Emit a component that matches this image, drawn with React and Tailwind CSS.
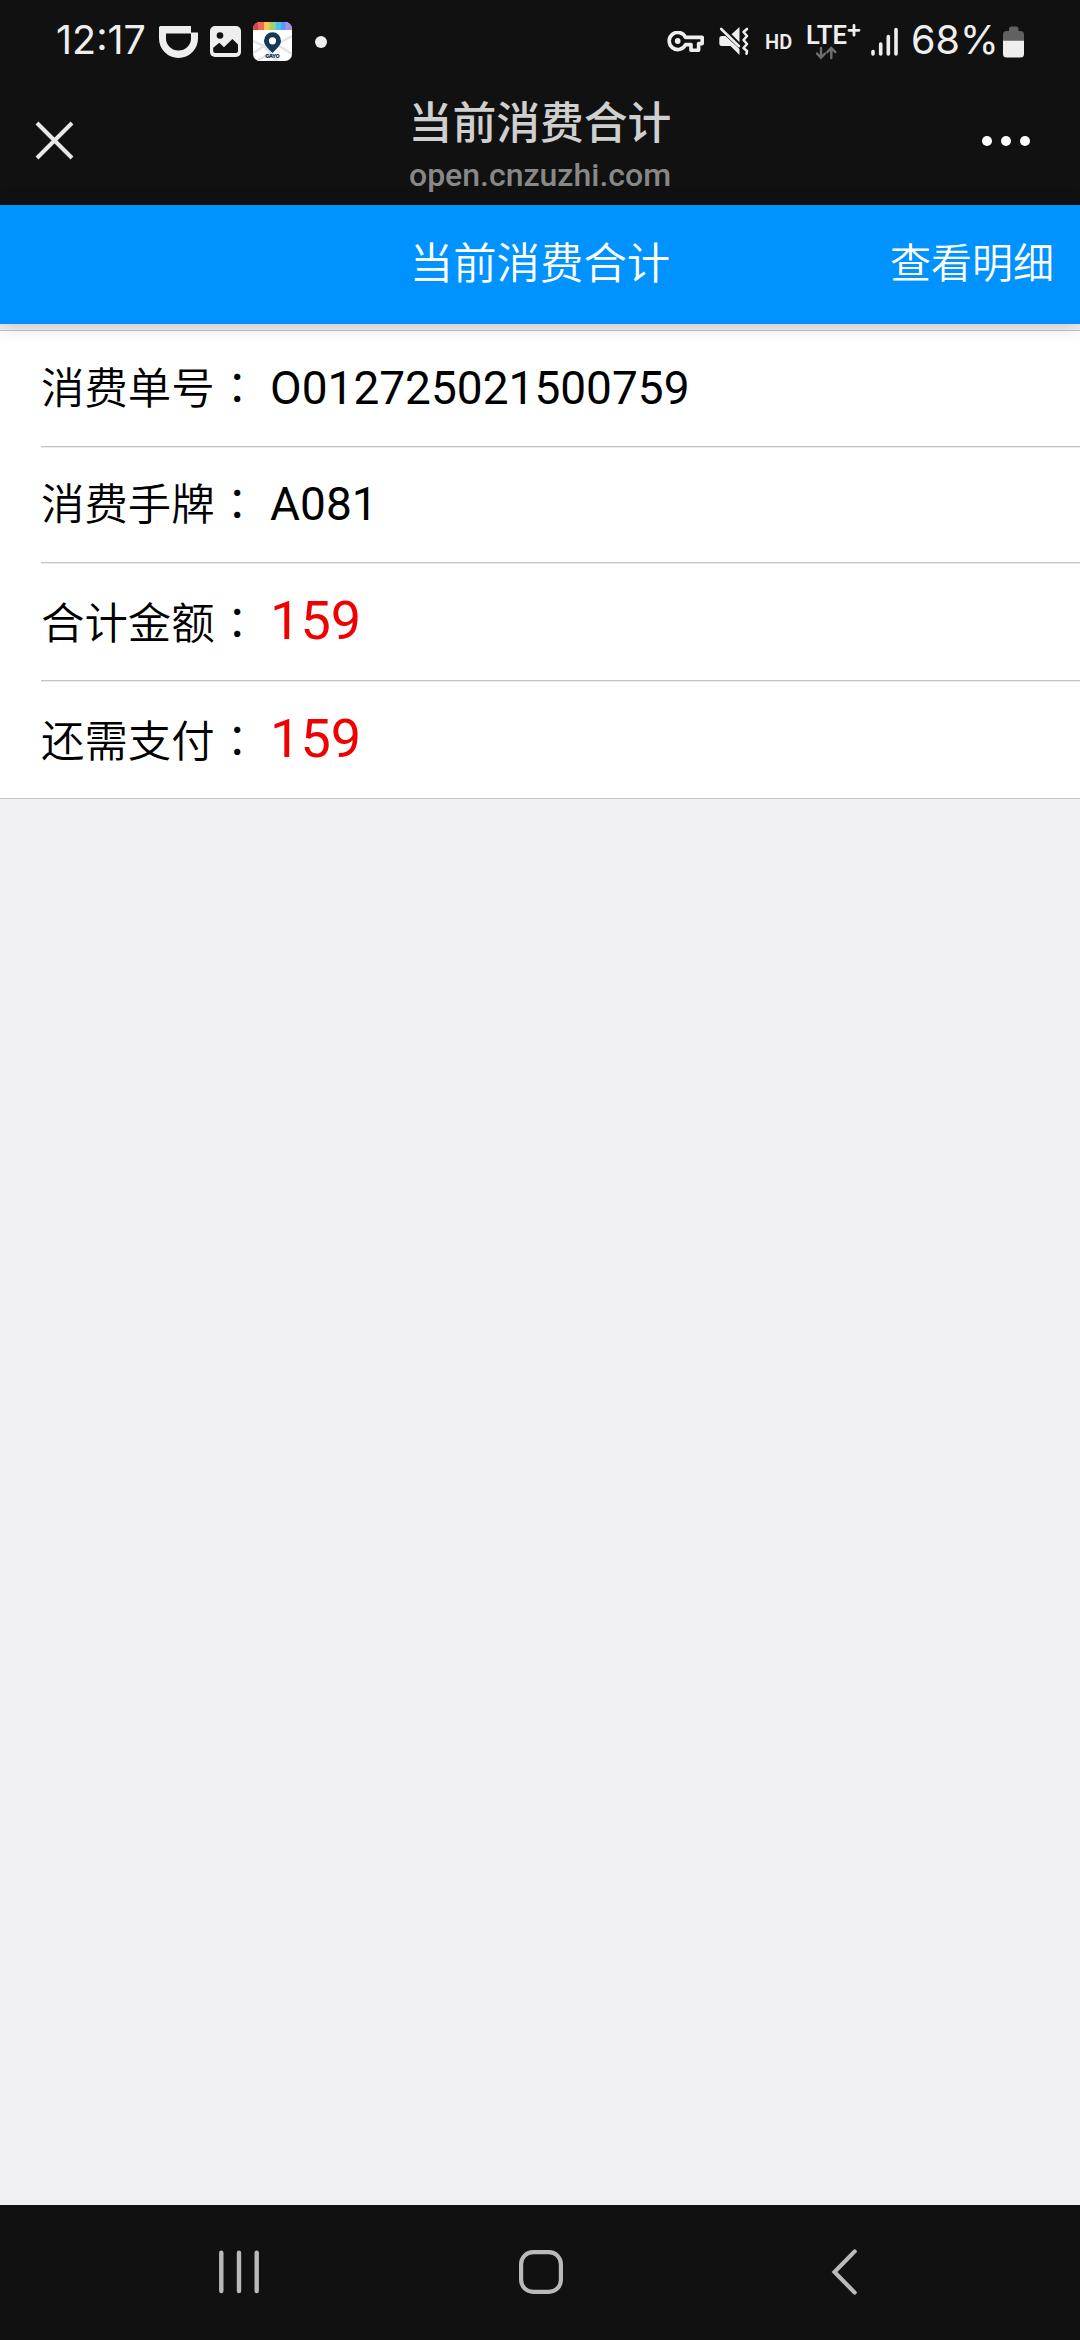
const rows = [
  { label: "消费单号", value: "O012725021500759", height: "h-[116px]" },
  { label: "消费手牌", value: "A081", height: "h-[116px]" },
  { label: "合计金额", value: "159", height: "h-[118px]", amount: true },
  { label: "还需支付", value: "159", height: "h-[117px]", amount: true },
];

const stripes = ["#d9414e", "#f4694f", "#fcc54e", "#9fd468", "#4fc0e8", "#5d9cec", "#a98be8"];

// STATUS BAR ICONS
function CupIcon() {
  return (
    <svg className="ml-[12px] h-[32px] w-[39px]" viewBox="0 0 39 32">
      <path
        fill="#eee"
        fillRule="evenodd"
        d="M1.5 0H32V6.5H39V12.5A19.5 19.5 0 0 1 0 12.5V1.5Q0 0 1.5 0ZM7 7.5V12.5A12.5 12 0 0 0 32 12.5V7.5Z"
      />
    </svg>
  );
}

function GalleryIcon() {
  return (
    <svg className="ml-[12px] h-[31px] w-[31px]" viewBox="0 0 31 31">
      <rect width="31" height="31" rx="5" fill="#eee" />
      <circle cx="10" cy="9.5" r="3.3" fill="#111" />
      <path fill="#111" d="M3.2 21.7L9.3 16.7L14 21.2L22.4 13L28 18.5V25Q28 27 26 27H5.2Q3.2 27 3.2 25Z" />
    </svg>
  );
}

function MapAppIcon() {
  return (
    <svg className="ml-[12px] h-[39px] w-[39px]" viewBox="0 0 39 39">
      <clipPath id="app-shape">
        <rect width="39" height="39" rx="7" />
      </clipPath>
      <g clipPath="url(#app-shape)">
        <rect width="39" height="39" fill="#fff" />
        <path d="M0 31L11 24L0 19M11 24L24 39M28 20L39 14M26 24L39 32M4 39L17 31" stroke="#e3e3e5" strokeWidth="2.5" fill="none" />
        {stripes.map((color, i) => (
          <rect key={color} x={i * 5.57} width="5.8" height="8" fill={color} />
        ))}
        <path
          fill="#12395a"
          fillRule="evenodd"
          d="M19.5 10.3A8.5 8.5 0 0 1 28 18.8C28 23.5 23.5 27 19.5 31C15.5 27 11 23.5 11 18.8A8.5 8.5 0 0 1 19.5 10.3ZM19.5 15.2A3.6 3.6 0 1 0 19.5 22.4A3.6 3.6 0 1 0 19.5 15.2Z"
        />
        <text x="19.5" y="36" textAnchor="middle" textLength="14.5" fontSize="5.4" fontWeight="900" fontFamily="Inter, sans-serif" fill="#12395a">
          GAYO
        </text>
      </g>
    </svg>
  );
}

function KeyIcon() {
  return (
    <svg className="h-[22px] w-[38px]" viewBox="0 0 38 22" fill="none" stroke="#eee" strokeWidth="3.6">
      <path d="M18.6 6.4H35.2V12.6H31.6V19.2H24V13.6H18.6A8.6 8.6 0 1 1 18.6 6.4Z" strokeLinejoin="round" />
      <circle cx="10.7" cy="10" r="2.9" fill="#eee" stroke="none" />
    </svg>
  );
}

function MuteIcon() {
  return (
    <svg className="ml-[14px] h-[29px] w-[30px]" viewBox="0 0 30 29">
      <path fill="#eee" d="M0.3 11.5Q0.3 9 2.5 9H6.5L20.5 22V28L11.5 19H2.5Q0.3 19 0.3 16.5ZM12.5 7.3L20.5 0V15.2Z" />
      <path d="M2.2 2L20 19.2" stroke="#eee" strokeWidth="2.6" strokeLinecap="round" />
      <path d="M28 2L24.5 5L28 9L24.5 13L28 17L24.5 21L28 24L27.5 26.7" fill="none" stroke="#eee" strokeWidth="2.6" strokeLinecap="round" strokeLinejoin="round" />
    </svg>
  );
}

function LteIcon() {
  return (
    <svg className="ml-[12px] h-[43px] w-[55px] pb-[1px]" viewBox="0 -5 55 42">
      <text x="0" y="18.5" textLength="41" lengthAdjust="spacingAndGlyphs" fontSize="25" fontWeight="600" fontFamily="Roboto, sans-serif" fill="#eee">
        LTE
      </text>
      <path d="M48 0.4V10.2M43 5.3H53" stroke="#eee" strokeWidth="2.8" strokeLinecap="round" />
      <path d="M15 23V32.5M11 28.5L15 32.8L19 28.5M25.3 33V23.5M21.3 27.2L25.3 23L29.3 27.2" fill="none" stroke="#6e6e6e" strokeWidth="2.4" strokeLinecap="round" />
    </svg>
  );
}

function SignalIcon() {
  return (
    <svg className="ml-[9px] h-[30px] w-[29px]" viewBox="0 0 29 30" stroke="#eee" strokeWidth="3.6" strokeLinecap="round">
      <path d="M3 24.5V27M10.7 17V27M18.3 9.5V27M26 2.5V27" />
    </svg>
  );
}

function BatteryIcon() {
  return (
    <svg className="ml-[5px] h-[32px] w-[21px]" viewBox="0 0 21 32">
      <path fill="#616161" d="M0 8.5Q0 5 3.5 5H6V3Q6 0.5 8.5 0.5H13Q15.5 0.5 15.5 3V5H17.5Q21 5 21 8.5V15H0Z" />
      <path fill="#eee" d="M0 14.7H21V28Q21 31.5 17.5 31.5H3.5Q0 31.5 0 28Z" />
    </svg>
  );
}

function StatusBar() {
  return (
    <div className="flex h-[83px] items-center justify-between pr-[56px] pl-[56px] text-[#eee]">
      <div className="flex items-center">
        <span className="w-[91px] pb-[2px] text-[39.5px] leading-none font-normal font-[Inter,sans-serif]">12:17</span>
        <CupIcon />
        <GalleryIcon />
        <MapAppIcon />
        <span className="ml-[23px] h-[12px] w-[12px] rounded-full bg-[#eee]" />
      </div>

      <div className="flex items-center">
        <KeyIcon />
        <MuteIcon />
        <span className="ml-[16px] w-[29px] text-[20px] leading-none font-semibold">HD</span>
        <LteIcon />
        <SignalIcon />
        <span className="ml-[12px] w-[87px] pb-[2px] text-[39.5px] leading-none font-normal font-[Inter,sans-serif]">68%</span>
        <BatteryIcon />
      </div>
    </div>
  );
}

function BrowserBar() {
  return (
    <div className="flex h-[122px] items-center justify-between pr-[50px] pl-[35px]">
      <svg className="mt-[-8px] h-[39px] w-[75px]" viewBox="0 0 75 39">
        <path d="M2 2L37 37M37 2L2 37" stroke="#e8e8e6" strokeWidth="4" />
      </svg>
      <div className="flex flex-col items-center pt-[2px]">
        <div className="h-[59px] text-[43.8px] leading-[60px] font-medium text-[#cfcfcf]">当前消费合计</div>
        <div className="h-[44px] text-[32px] leading-[44px] font-medium text-[#888]">open.cnzuzhi.com</div>
      </div>
      <div className="mt-[-7px] flex w-[60px] justify-end gap-[9px]">
        <span className="h-[10px] w-[10px] rounded-full bg-white" />
        <span className="h-[10px] w-[10px] rounded-full bg-white" />
        <span className="h-[10px] w-[10px] rounded-full bg-white" />
      </div>
    </div>
  );
}

function NavBar() {
  return (
    <div className="flex h-[135px] items-center bg-[#111] pb-[1px] pl-[219px]">
      <svg className="h-[44px] w-[40px]" viewBox="0 0 40 44" stroke="#bababa" strokeWidth="4.4" strokeLinecap="round">
        <path d="M2.3 2.8V41M20 2.8V41M37.7 2.8V41" />
      </svg>
      <svg className="ml-[260px] h-[44px] w-[44px]" viewBox="0 0 44 44">
        <rect x="2.1" y="2.1" width="39.8" height="39.8" rx="12" fill="none" stroke="#bababa" strokeWidth="4.2" />
      </svg>
      <svg className="ml-[268px] h-[46px] w-[27px]" viewBox="0 0 27 46">
        <path d="M23.7 2.4L3.5 23L23.7 43.6" fill="none" stroke="#bababa" strokeWidth="4.2" strokeLinecap="round" />
      </svg>
    </div>
  );
}

export default function App() {
  return (
    <div className="flex h-[2340px] w-[1080px] flex-col overflow-hidden bg-[#efeff4] font-[Roboto,'Noto_Sans_CJK_SC',sans-serif]">
      <div className="bg-[#111]">
        <StatusBar />
        <BrowserBar />
      </div>

      {/* PAGE HEADER */}
      <header className="z-10 grid h-[119px] grid-cols-[1fr_auto_1fr] items-center bg-[#0093ff] text-white shadow-[0_1px_18px_rgba(0,0,0,0.2)]">
        <span />
        <h1 className="text-[43.4px] font-[350]">当前消费合计</h1>
        <a className="pr-[26px] text-right text-[41px] font-[350]">查看明细</a>
      </header>

      {/* BILL SUMMARY */}
      <ul className="mt-[6px] border-y border-[#c4c3c8] bg-white">
        {rows.map((row, i) => (
          <li key={row.label} className="pl-[41px]">
            <div
              className={`flex items-baseline ${row.height} ${
                i < rows.length - 1 ? "border-b border-[#c4c4c6] shadow-[0_1px_0_#ececec]" : ""
              }`}
            >
              <span className={`text-[43.4px] font-[350] ${row.amount ? "leading-[115px]" : "leading-[115px]"}`}>
                {row.label}
              </span>
              <span className="w-[55.5px] pl-[1px] text-[43.4px] leading-[100px] font-[350] font-['Noto_Sans_CJK_TC',sans-serif]">：</span>
              <span
                className={
                  row.amount
                    ? "text-[54px] leading-[115px] text-[#f00000]"
                    : "text-[46px] leading-[115px] text-black"
                }
              >
                {row.value}
              </span>
            </div>
          </li>
        ))}
      </ul>

      <div className="flex-1" />
      <NavBar />
    </div>
  );
}
